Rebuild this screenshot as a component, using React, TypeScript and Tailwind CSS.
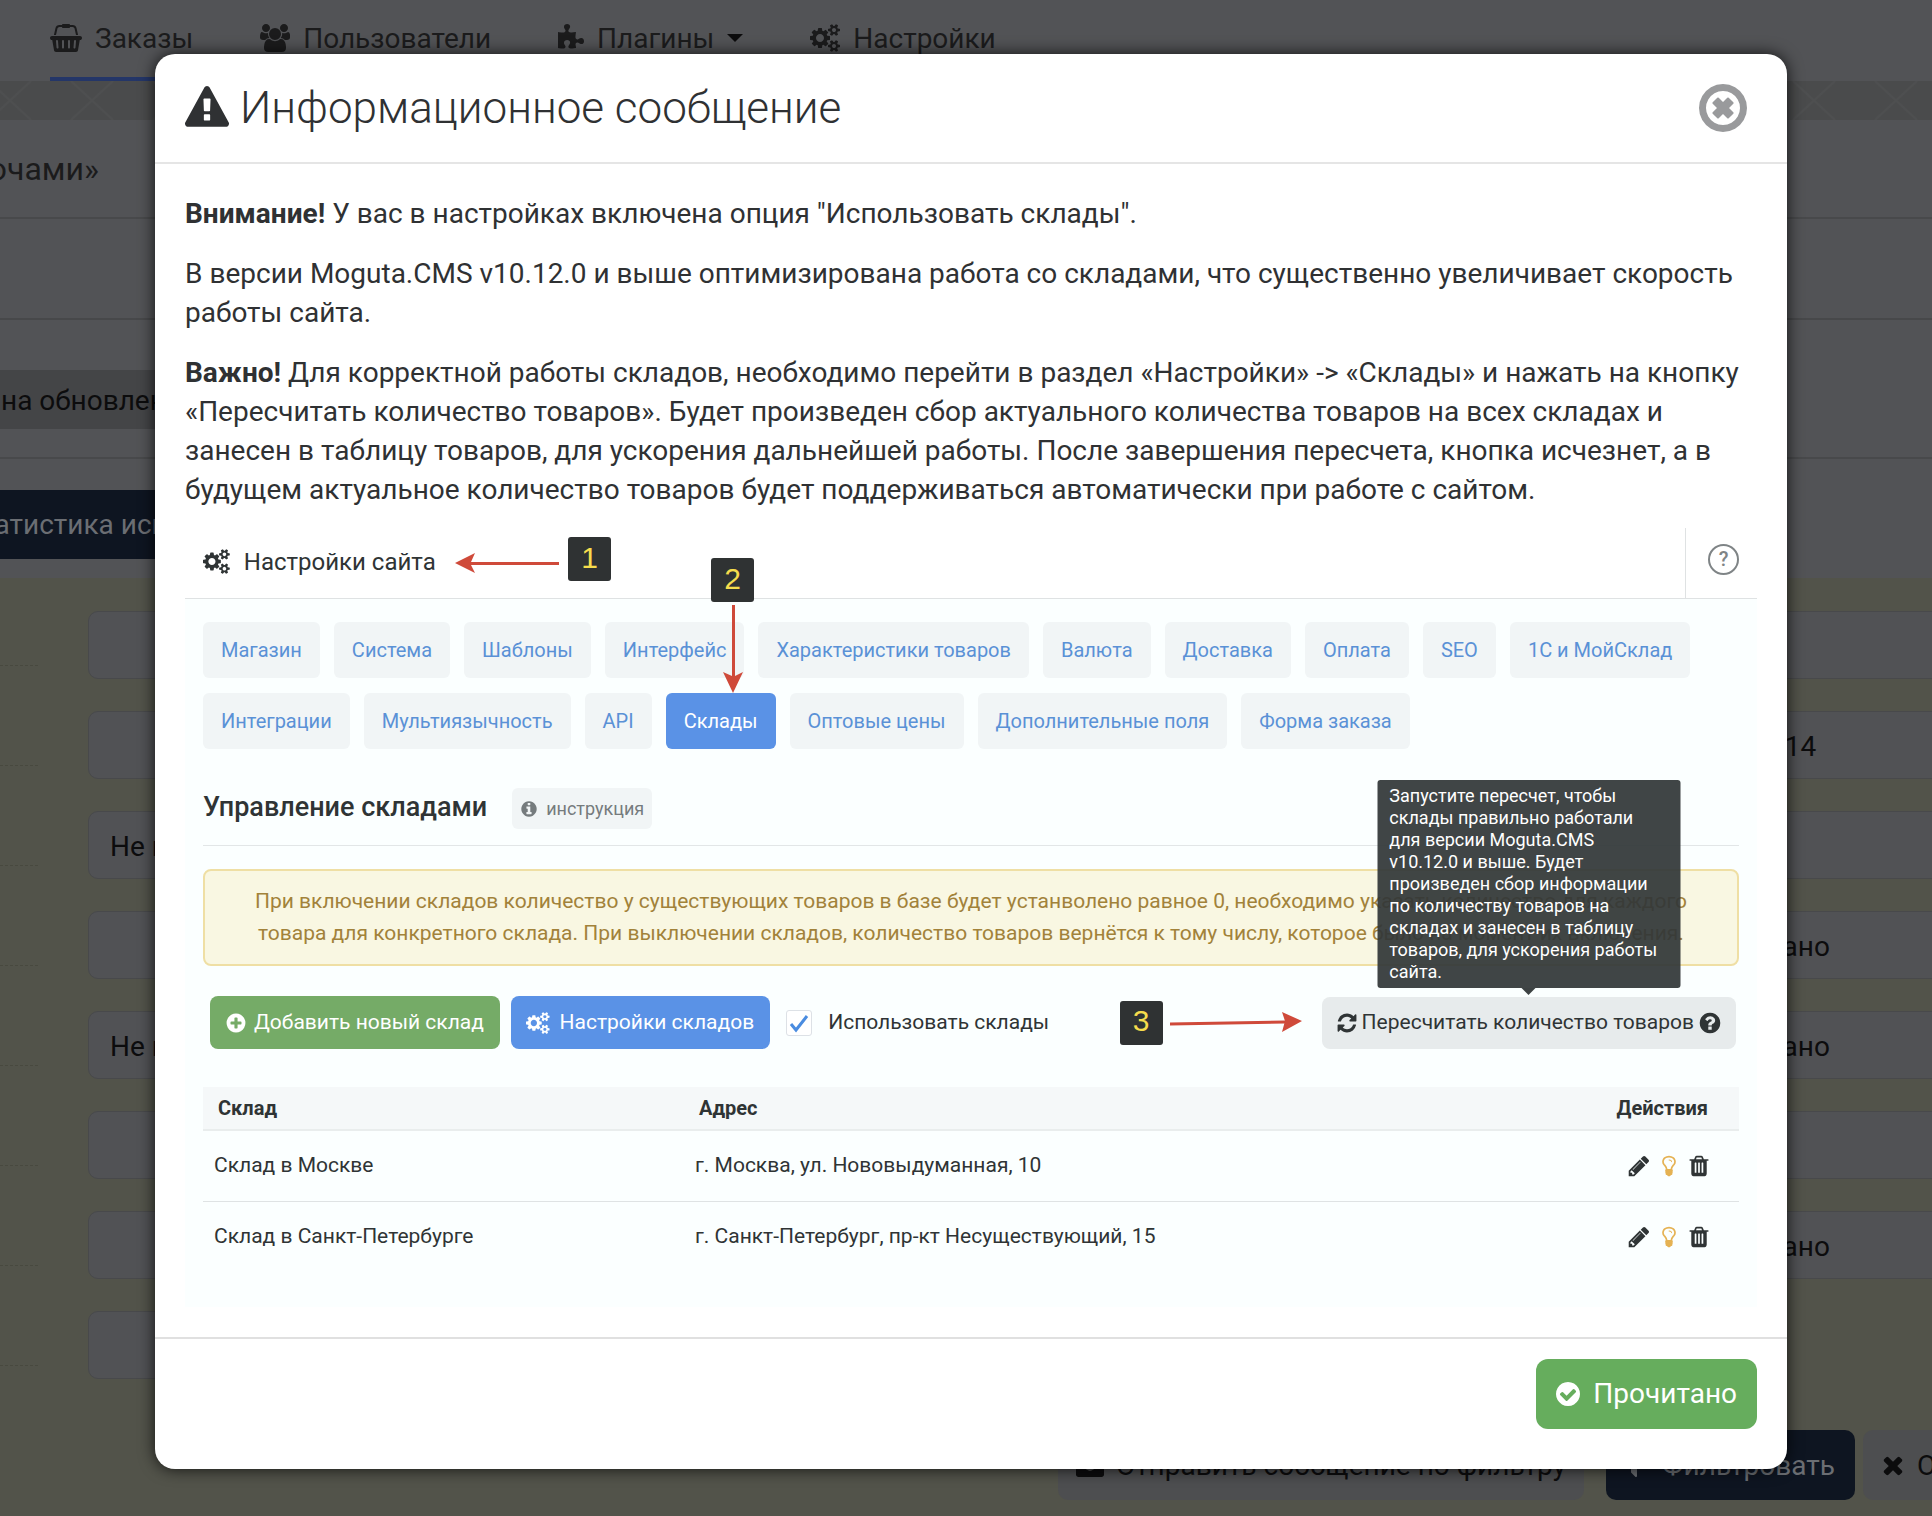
import type { ReactNode } from "react";

// Shared outline of every round icon
const DISC =
  "M1664 896q0 209-103 385.5t-279.5 279.5-385.5 103-385.5-103-279.5-279.5-103-385.5 103-385.5 279.5-279.5 385.5-103 385.5 103 279.5 279.5 103 385.5z";

const icons = {
  basket: {
    width: 2048,
    d: "M1920 768q53 0 90.5 37.5t37.5 90.5-37.5 90.5-90.5 37.5h-15l-115 662q-8 46-44 76t-82 30h-1280q-46 0-82-30t-44-76l-115-662h-15q-53 0-90.5-37.5t-37.5-90.5 37.5-90.5 90.5-37.5h1792zm-1435 800q26-2 43.5-22.5t15.5-46.5l-32-416q-2-26-22.5-43.5t-46.5-15.5-43.5 22.5-15.5 46.5l32 416q2 25 20.5 42t43.5 17h5zm411-64v-416q0-26-19-45t-45-19-45 19-19 45v416q0 26 19 45t45 19 45-19 19-45zm384 0v-416q0-26-19-45t-45-19-45 19-19 45v416q0 26 19 45t45 19 45-19 19-45zm352 5l32-416q2-26-15.5-46.5t-43.5-22.5-46.5 15.5-22.5 43.5l-32 416q-2 26 15.5 46.5t43.5 22.5h5q25 0 43.5-17t20.5-42zm-1156-1217l-93 412h-132l101-441q19-88 89-143.5t160-55.5h167q0-26 19-45t45-19h384q26 0 45 19t19 45h167q90 0 160 55.5t89 143.5l101 441h-132l-93-412q-11-44-45.5-72t-79.5-28h-167q0 26-19 45t-45 19h-384q-26 0-45-19t-19-45h-167q-45 0-79.5 28t-45.5 72z",
  },
  users: {
    width: 1920,
    d: "M593 896q-162 5-265 128h-134q-82 0-138-40.5t-56-118.5q0-353 124-353 6 0 43.5 21t97.5 42.5 119 21.5q67 0 133-23-5 37-5 66 0 159 93 256zm1071 637q0 120-73 189.5t-194 69.5h-874q-121 0-194-69.5t-73-189.5q0-53 3.5-103.5t14-109 26.5-108.5 43-97.5 62-81 85.5-53.5 111.5-20q10 0 43 21.5t73 48 107 48 135 21.5 135-21.5 107-48 73-48 43-21.5q61 0 111.5 20t85.5 53.5 62 81 43 97.5 26.5 108.5 14 109 3.5 103.5zm-1024-1277q0 106-75 181t-181 75-181-75-75-181 75-181 181-75 181 75 75 181zm704 384q0 159-112.5 271.5t-271.5 112.5-271.5-112.5-112.5-271.5 112.5-271.5 271.5-112.5 271.5 112.5 112.5 271.5zm576 225q0 78-56 118.5t-138 40.5h-134q-103-123-265-128 93-97 93-256 0-29-5-66 66 23 133 23 59 0 119-21.5t97.5-42.5 43.5-21q124 0 124 353zm-128-609q0 106-75 181t-181 75-181-75-75-181 75-181 181-75 181 75 75 181z",
  },
  puzzle: {
    width: 1664,
    d: "M1664 1098q0 81-44.5 135t-123.5 54q-41 0-77.5-17.5t-59-38-56.5-38-71-17.5q-110 0-110 124 0 39 16 115t15 115v5q-22 0-33 1-34 3-97.5 11.5t-115.5 13.5-98 5q-61 0-103-26.5t-42-83.5q0-37 17.5-71t38-56.5 38-59 17.5-77.5q0-79-54-123.5t-135-44.5q-84 0-143 45.5t-59 127.5q0 43 15 83t33.5 64.5 33.5 53 15 50.5q0 45-46 89-37 35-117 35-95 0-245-24-9-2-27.5-4t-27.5-4l-13-2q-1 0-3-1-2 0-2-1v-1024q2 1 17.5 3.5t34 5 21.5 3.5q150 24 245 24 80 0 117-35 46-44 46-89 0-22-15-50.5t-33.5-53-33.5-64.5-15-83q0-82 59-127.5t144-45.5q80 0 134 44.5t54 123.5q0 41-17.5 77.5t-38 59-38 56.5-17.5 71q0 57 42 83.5t103 26.5q64 0 180-15t163-17v2q-1 2-3.5 17.5t-5 34-3.5 21.5q-24 150-24 245 0 80 35 117 44 46 89 46 22 0 50.5-15t53-33.5 64.5-33.5 83-15q82 0 127.5 59t45.5 143z",
  },
  cogs: {
    width: 1920,
    d: "M896 896q0-106-75-181t-181-75-181 75-75 181 75 181 181 75 181-75 75-181zm768 512q0-52-38-90t-90-38-90 38-38 90q0 53 37.5 90.5t90.5 37.5 90.5-37.5 37.5-90.5zm0-1024q0-52-38-90t-90-38-90 38-38 90q0 53 37.5 90.5t90.5 37.5 90.5-37.5 37.5-90.5zm-384 421v185q0 10-7 19.5t-16 10.5l-155 24q-11 35-32 76 34 48 90 115 7 11 7 20 0 12-7 19-23 30-82.5 89.5t-78.5 59.5q-11 0-21-7l-115-90q-37 19-77 31-11 108-23 155-7 24-30 24h-186q-11 0-20-7.5t-10-17.5l-23-153q-34-10-75-31l-118 89q-7 7-20 7-11 0-21-8-144-133-144-160 0-9 7-19 10-14 41-53t47-61q-23-44-35-82l-152-24q-10-1-17-9.5t-7-19.5v-185q0-10 7-19.5t16-10.5l155-24q11-35 32-76-34-48-90-115-7-11-7-20 0-12 7-20 22-30 82-89t79-59q11 0 21 7l115 90q34-18 77-32 11-108 23-154 7-24 30-24h186q11 0 20 7.5t10 17.5l23 153q34 10 75 31l118-89q8-7 20-7 11 0 21 8 144 133 144 160 0 8-7 19-12 16-42 54t-45 60q23 48 34 82l152 23q10 2 17 10.5t7 19.5zm640 533v140q0 16-149 31-12 27-30 52 51 113 51 138 0 4-4 7-122 71-124 71-8 0-46-47t-52-68q-20 2-30 2t-30-2q-14 21-52 68t-46 47q-2 0-124-71-4-3-4-7 0-25 51-138-18-25-30-52-149-15-149-31v-140q0-16 149-31 13-29 30-52-51-113-51-138 0-4 4-7 4-2 35-20t59-34 30-16q8 0 46 46.5t52 67.5q20-2 30-2t30 2q51-71 92-112l6-2q4 0 124 70 4 3 4 7 0 25-51 138 17 23 30 52 149 15 149 31zm0-1024v140q0 16-149 31-12 27-30 52 51 113 51 138 0 4-4 7-122 71-124 71-8 0-46-47t-52-68q-20 2-30 2t-30-2q-14 21-52 68t-46 47q-2 0-124-71-4-3-4-7 0-25 51-138-18-25-30-52-149-15-149-31v-140q0-16 149-31 13-29 30-52-51-113-51-138 0-4 4-7 4-2 35-20t59-34 30-16q8 0 46 46.5t52 67.5q20-2 30-2t30 2q51-71 92-112l6-2q4 0 124 70 4 3 4 7 0 25-51 138 17 23 30 52 149 15 149 31z",
  },
  warning: {
    width: 1792,
    d: "M1024 1375v-190q0-14-9.5-23.5t-22.5-9.5h-192q-13 0-22.5 9.5t-9.5 23.5v190q0 14 9.5 23.5t22.5 9.5h192q13 0 22.5-9.5t9.5-23.5zm-2-374l18-459q0-12-10-19-13-11-24-11h-220q-11 0-24 11-10 7-10 21l17 457q0 10 10 16.5t24 6.5h185q14 0 23.5-6.5t10.5-16.5zm-14-934l768 1408q35 63-2 126-17 29-46.5 46t-63.5 17h-1536q-34 0-63.5-17t-46.5-46q-37-63-2-126l768-1408q17-31 47-49t65-18 65 18 47 49z",
  },
  close: {
    width: 1792,
    d: `M1225 1079l-146 146q-10 10-23 10t-23-10l-137-137-137 137q-10 10-23 10t-23-10l-146-146q-10-10-10-23t10-23l137-137-137-137q-10-10-10-23t10-23l146-146q10-10 23-10t23 10l137 137 137-137q10-10 23-10t23 10l146 146q10 10 10 23t-10 23l-137 137 137 137q10 10 10 23t-10 23zM1440 896q0-148-73-273t-198-198-273-73-273 73-198 198-73 273 73 273 198 198 273 73 273-73 198-198 73-273z${DISC}`,
  },
  info: {
    width: 1792,
    d: `M1152 1376v-160q0-14-9-23t-23-9h-96v-512q0-14-9-23t-23-9h-320q-14 0-23 9t-9 23v160q0 14 9 23t23 9h96v320h-96q-14 0-23 9t-9 23v160q0 14 9 23t23 9h448q14 0 23-9t9-23zm-128-896v-160q0-14-9-23t-23-9h-192q-14 0-23 9t-9 23v160q0 14 9 23t23 9h192q14 0 23-9t9-23z${DISC}`,
  },
  plus: {
    width: 1792,
    d: `M1344 960v-128q0-26-19-45t-45-19h-256v-256q0-26-19-45t-45-19h-128q-26 0-45 19t-19 45v256h-256q-26 0-45 19t-19 45v128q0 26 19 45t45 19h256v256q0 26 19 45t45 19h128q26 0 45-19t19-45v-256h256q26 0 45-19t19-45z${DISC}`,
  },
  check: {
    width: 1792,
    d: `M1412 734q0-28-18-46l-91-90q-19-19-45-19t-45 19l-408 407-226-226q-19-19-45-19t-45 19l-91 90q-18 18-18 46 0 27 18 45l362 362q19 19 45 19 27 0 46-19l543-543q18-18 18-45z${DISC}`,
  },
  question: {
    width: 1792,
    d: `M1024 1376v-192q0-14-9-23t-23-9h-192q-14 0-23 9t-9 23v192q0 14 9 23t23 9h192q14 0 23-9t9-23zm256-672q0-88-55.5-163t-138.5-116-170-41q-243 0-371 213-15 24 8 42l132 100q7 6 19 6 16 0 25-12 53-68 86-92 34-24 86-24 48 0 85.5 26t37.5 59q0 38-20 61t-68 45q-63 28-115.5 86.5t-52.5 125.5v36q0 14 9 23t23 9h192q14 0 23-9t9-23q0-19 21.5-49.5t54.5-49.5q32-18 49-28.5t46-35 44.5-48 28-60.5 12.5-81z${DISC}`,
  },
  refresh: {
    width: 1792,
    d: "M1639 1056q0 5-1 7-64 268-268 434.5t-478 166.5q-146 0-282.5-55t-243.5-157l-129 129q-19 19-45 19t-45-19-19-45v-448q0-26 19-45t45-19h448q26 0 45 19t19 45-19 45l-137 137q71 66 161 102t187 36q134 0 250-65t186-179q11-17 53-117 8-23 30-23h192q13 0 22.5 9.5t9.5 22.5zm25-800v448q0 26-19 45t-45 19h-448q-26 0-45-19t-19-45 19-45l138-138q-148-137-349-137-134 0-250 65t-186 179q-11 17-53 117-8 23-30 23h-199q-13 0-22.5-9.5t-9.5-22.5v-7q65-268 270-434.5t480-166.5q146 0 284 55.5t245 156.5l130-129q19-19 45-19t45 19 19 45z",
  },
  pencil: {
    width: 1792,
    d: "M491 1536l91-91-235-235-91 91v107h128v128h107zm523-928q0-22-22-22-10 0-17 7l-542 542q-7 7-7 17 0 22 22 22 10 0 17-7l542-542q7-7 7-17zm-54-192l416 416-832 832h-416v-416zm683 96q0 53-37 90l-166 166-416-416 166-165q36-38 90-38 53 0 91 38l235 234q37 39 37 91z",
  },
  bulb: {
    width: 1792,
    d: "M1120 576q0 13-9.5 22.5t-22.5 9.5-22.5-9.5-9.5-22.5q0-46-54-71t-106-25q-13 0-22.5-9.5t-9.5-22.5 9.5-22.5 22.5-9.5q50 0 99.5 16t87 54 37.5 90zm160 0q0-72-34.5-134t-90-101.5-123-62-136.5-22.5-136.5 22.5-123 62-90 101.5-34.5 134q0 101 68 180 10 11 30.5 33t30.5 33q128 153 141 298h228q13-145 141-298 10-11 30.5-33t30.5-33q68-79 68-180zm128 0q0 155-103 268-45 49-74.5 87t-59.5 95.5-34 107.5q47 28 47 82 0 37-25 64 25 27 25 64 0 52-45 81 13 23 13 47 0 46-31.5 71t-77.5 25q-20 44-60 70t-87 26-87-26-60-70q-46 0-77.5-25t-31.5-71q0-24 13-47-45-29-45-81 0-37 25-64-25-27-25-64 0-54 47-82-4-50-34-107.5t-59.5-95.5-74.5-87q-103-113-103-268 0-99 44.5-184.5t117-142 164-89 186.5-32.5 186.5 32.5 164 89 117 142 44.5 184.5z",
  },
  trash: {
    width: 1792,
    d: "M704 1376v-704q0-14-9-23t-23-9h-64q-14 0-23 9t-9 23v704q0 14 9 23t23 9h64q14 0 23-9t9-23zm256 0v-704q0-14-9-23t-23-9h-64q-14 0-23 9t-9 23v704q0 14 9 23t23 9h64q14 0 23-9t9-23zm256 0v-704q0-14-9-23t-23-9h-64q-14 0-23 9t-9 23v704q0 14 9 23t23 9h64q14 0 23-9t9-23zm-544-992h448l-48-117q-7-9-17-11h-317q-10 2-17 11zm928 32v64q0 14-9 23t-23 9h-96v948q0 83-47 143.5t-113 60.5h-832q-66 0-113-58.5t-47-141.5v-952h-96q-14 0-23-9t-9-23v-64q0-14 9-23t23-9h309l70-167q15-37 54-63t79-26h320q40 0 79 26t54 63l70 167h309q14 0 23 9t9 23z",
  },
  times: {
    width: 1792,
    d: "M1490 1322q0 40-28 68l-136 136q-28 28-68 28t-68-28l-294-294-294 294q-28 28-68 28t-68-28l-136-136q-28-28-28-68t28-68l294-294-294-294q-28-28-28-68t28-68l136-136q28-28 68-28t68 28l294 294 294-294q28-28 68-28t68 28l136 136q28 28 28 68t-28 68l-294 294 294 294q28 28 28 68z",
  },
  filter: {
    width: 1792,
    d: "M1595 295q17 41-14 70l-493 493v742q0 42-39 59-13 5-25 5-27 0-45-19l-256-256q-19-19-19-45v-486l-493-493q-31-29-14-70 17-39 59-39h1280q42 0 59 39z",
  },
  mail: {
    width: 1792,
    d: "M1792 710v794q0 66-47 113t-113 47h-1472q-66 0-113-47t-47-113v-794q44 49 101 87 362 246 497 345 57 42 92.5 65.5t94.5 48 110 24.5h2q51 0 110-24.5t94.5-48 92.5-65.5q170-123 498-345 57-39 100-87zm0-294q0 79-49 151t-122 123q-376 261-468 325-10 7-42.5 30.5t-54 38-52 32.5-57.5 27-50 9h-2q-23 0-50-9t-57.5-27-52-32.5-54-38-42.5-30.5q-91-64-262-182.5t-205-142.5q-62-42-117-115.5t-55-136.5q0-78 41.5-130t118.5-52h1472q65 0 112.5 47t47.5 113z",
  },
};

type IconProps = { name: keyof typeof icons; className: string };

const Icon = ({ name, className }: IconProps) => (
  <svg
    viewBox={`0 0 ${icons[name].width} 1792`}
    className={`w-auto shrink-0 ${className}`}
    fill="currentColor"
    fillRule="evenodd"
    aria-hidden="true"
  >
    <path d={icons[name].d} />
  </svg>
);

const tabs = [
  "Магазин",
  "Система",
  "Шаблоны",
  "Интерфейс",
  "Характеристики товаров",
  "Валюта",
  "Доставка",
  "Оплата",
  "SEO",
  "1С и МойСклад",
  "Интеграции",
  "Мультиязычность",
  "API",
  "Склады",
  "Оптовые цены",
  "Дополнительные поля",
  "Форма заказа",
];

const stores = [
  { name: "Склад в Москве", address: "г. Москва, ул. Нововыдуманная, 10" },
  {
    name: "Склад в Санкт-Петербурге",
    address: "г. Санкт-Петербург, пр-кт Несуществующий, 15",
  },
];

const filterRows = [
  { left: "", right: "" },
  { left: "", right: "1/06/2014" },
  { left: "Не выбрано", right: "" },
  { left: "", right: "Не указано" },
  { left: "Не выбрано", right: "Не указано" },
  { left: "", right: "" },
  { left: "", right: "Не указано" },
  { left: "", right: null },
];

const Field = ({ value, label }: { value: string; label: string }) => (
  <input
    aria-label={label}
    defaultValue={value}
    className="h-[68px] w-full rounded-[10px] border border-[#48494b] bg-[#515255] px-[21px] pt-[2px] text-[28px] text-[#0c0c0d]"
  />
);

const NavItem = ({
  children,
  active,
}: {
  children: ReactNode;
  active?: boolean;
}) => (
  <a
    href="#"
    className={`flex items-center gap-[13px] border-b-4 pb-[1px] ${
      active ? "border-[#243668]" : "border-transparent"
    }`}
  >
    {children}
  </a>
);

const Backdrop = () => (
  <div className="min-h-screen text-[28px] leading-[39px]">
    <nav className="flex h-[81px] gap-[67px] pl-[50px]">
      <NavItem active>
        <Icon name="basket" className="h-7" />
        Заказы
      </NavItem>
      <NavItem>
        <Icon name="users" className="h-7" />
        Пользователи
      </NavItem>
      <NavItem>
        <Icon name="puzzle" className="h-7" />
        Плагины
        <span className="border-x-8 border-t-8 border-x-transparent border-t-[#0c0c0d]" />
      </NavItem>
      <NavItem>
        <Icon name="cogs" className="h-7" />
        Настройки
      </NavItem>
    </nav>

    <div className="h-[39px] bg-[#4a4b4c]">
      <svg className="h-full w-full" stroke="#4e4f50" strokeWidth="2">
        <defs>
          <pattern
            id="cross"
            x="51"
            width="82"
            height="39"
            patternUnits="userSpaceOnUse"
          >
            <path d="M20 0l42 39M62 0L20 39" fill="none" />
          </pattern>
        </defs>
        <rect width="100%" height="100%" fill="url(#cross)" stroke="none" />
      </svg>
    </div>

    <div className="flex h-[99px] items-center border-b-2 border-[#48494b] pt-[2px]">
      <p className="flex w-[99px] justify-end text-[32px] whitespace-nowrap">
        Сайт с ключами»
      </p>
    </div>
    <div className="h-[101px] border-b-2 border-[#47484a]" />
    <div className="flex h-[139px] items-end border-b-2 border-[#48494b] pb-7">
      <p className="flex h-[59px] w-[800px] items-center bg-[#444547] pt-[2px] pl-px text-[#0c0c0d]">
        на обновление
      </p>
    </div>
    <div className="flex h-[119px] items-center pt-3">
      <button className="flex h-[69px] w-[324px] items-center justify-end bg-[#0e1521] whitespace-nowrap text-[#6b6e73]">
        Статистика использования
      </button>
    </div>

    <div className="h-[938px] bg-[#52534a] pt-[33px]">
      <div className="flex flex-col gap-8">
        {filterRows.map((row, i) => (
          <div key={i} className="flex items-start">
            <span className="mt-[54px] mr-[50px] w-[38px] border-t border-dashed border-[#48493f]" />
            <div className="w-[862px]">
              <Field value={row.left} label={`Фильтр ${i + 1}`} />
            </div>
            <div className="ml-auto w-[271px]">
              {row.right !== null && (
                <div className="w-[400px]">
                  <Field value={row.right} label={`Значение ${i + 1}`} />
                </div>
              )}
            </div>
          </div>
        ))}
      </div>
      <div className="mt-[51px] flex justify-end gap-2 overflow-hidden whitespace-nowrap">
        <button className="mr-[14px] flex h-[70px] items-center gap-3 rounded-[10px] bg-[#4d4e50] px-[18px] text-[#0c0c0d]">
          <Icon name="mail" className="h-7" />
          Отправить сообщение по фильтру
        </button>
        <button className="flex h-[70px] items-center gap-3.5 rounded-[10px] bg-[#0e1521] pr-5 pl-3.5 text-[#6b6e73]">
          <Icon name="filter" className="h-7" />
          Фильтровать
        </button>
        <div className="w-[69px]">
          <button className="flex h-[70px] items-center gap-2.5 rounded-[10px] bg-[#4d4e50] px-4 text-[#0c0c0d]">
            <Icon name="times" className="h-7" />
            Отменить
          </button>
        </div>
      </div>
    </div>
  </div>
);

const Step = ({ children }: { children: ReactNode }) => (
  <span className="flex h-11 w-[43px] shrink-0 items-center justify-center rounded-[3px] bg-[#2f3233] pb-1 font-['Liberation_Sans',sans-serif] text-[30px] text-[#f5dc4d]">
    {children}
  </span>
);

const Tooltip = () => (
  <div
    role="tooltip"
    className="absolute bottom-full left-1/2 mb-[9px] w-[303px] -translate-x-1/2 rounded-[3px] bg-[#323738]/93 py-[5px] pr-4 pl-3 text-left text-lg leading-[22px] text-white"
  >
    Запустите пересчет, чтобы склады правильно работали для версии Moguta.CMS
    v10.12.0 и выше. Будет произведен сбор информации по количеству товаров на
    складах и занесен в таблицу товаров, для ускорения работы сайта.
    <span className="absolute top-full left-1/2 -translate-x-1/2 border-x-[7px] border-t-[7px] border-x-transparent border-t-[#3d4243]" />
  </div>
);

const Settings = () => (
  <section className="mt-[19px] text-[#2f3435]">
    <div className="relative flex h-[71px] items-center border-b border-[#dfe2e3] pb-[3px] pl-[18px]">
      <Icon name="cogs" className="h-[25px]" />
      <h3 className="ml-[14px] text-2xl">Настройки сайта</h3>
      <div className="absolute top-[9px] left-[270px] flex items-center gap-[9px]">
        <svg
          className="h-[30px] w-[104px] text-[#cf4a3a]"
          viewBox="0 0 104 30"
          fill="currentColor"
        >
          <path d="M0 19L20 9l-4 9h88v3H16l4 8z" />
        </svg>
        <Step>1</Step>
      </div>
      <div className="absolute top-[30px] left-[526px] flex flex-col items-center gap-[3px]">
        <Step>2</Step>
        <svg
          className="h-[88px] w-[22px] text-[#cf4a3a]"
          viewBox="0 0 22 88"
          fill="currentColor"
        >
          <path d="M11 88L1 67l9 4V0h3v71l8-4z" />
        </svg>
      </div>
      <div className="-mb-[3px] ml-auto flex w-[72px] items-center self-stretch border-l border-[#dfe2e3] pl-[22px]">
        <button
          aria-label="Справка"
          className="mb-[8px] flex size-[31px] items-center justify-center rounded-full border-2 border-[#7f8486] text-xl font-medium text-[#7f8486]"
        >
          ?
        </button>
      </div>
    </div>

    <div className="bg-[#fbffff] px-[18px] pb-[35px]">
      <div className="-mt-px flex flex-wrap gap-x-[14px] gap-y-[15px] pt-6">
        {tabs.map((tab) => (
          <button
            key={tab}
            className={`h-14 rounded-md px-[18px] text-xl ${
              tab === "Склады"
                ? "bg-[#5a92e6] text-white"
                : "bg-[#f1f5f6] text-[#5a91d6]"
            }`}
          >
            {tab}
          </button>
        ))}
      </div>

      <div className="mt-[39px] flex items-center gap-[25px] border-b border-[#e2e6e7] pb-[16px]">
        <h4 className="pb-1 text-[27px] leading-[36px] font-medium">
          Управление складами
        </h4>
        <button className="flex h-[41px] items-center gap-2 rounded-md bg-[#f1f5f6] px-2 text-lg text-[#757b7d]">
          <Icon name="info" className="h-[18px]" />
          инструкция
        </button>
      </div>

      <p className="mt-[23px] rounded-lg border-2 border-[#efdfa4] bg-[#f9f7e2] px-10 pt-[14px] pb-[15px] text-center text-[21px] leading-8 text-[#a2823a]">
        При включении складов количество у существующих товаров в базе будет
        устанволено равное 0, необходимо указать количество для каждого <br />
        товара для конкретного склада. При выключении складов, количество
        товаров вернётся к тому числу, которое было на момент их включения.
      </p>

      <div className="mt-[30px] flex items-center pr-[3px] pl-[7px] text-[21px]">
        <button className="flex h-[53px] items-center gap-[7px] rounded-lg bg-[#75ab67] pr-4 pl-[15px] text-white">
          <Icon name="plus" className="h-[22px]" />
          Добавить новый склад
        </button>
        <button className="ml-[11px] flex h-[53px] items-center gap-2.5 rounded-lg bg-[#5a92e6] pr-4 pl-[15px] text-white">
          <Icon name="cogs" className="h-[22px]" />
          Настройки складов
        </button>
        <label className="ml-4 flex items-center gap-4">
          <span className="relative flex size-[26px] items-center justify-center">
            <input
              type="checkbox"
              defaultChecked
              className="size-full appearance-none rounded-[3px] border border-[#dde1e6] bg-white"
            />
            <svg
              className="absolute size-5"
              viewBox="0 0 20 20"
              fill="none"
              stroke="#4a8ce0"
              strokeWidth="3"
            >
              <path d="M2 11l5 6L18 3" />
            </svg>
          </span>
          Использовать склады
        </label>
        <div className="ml-auto flex items-center gap-[7px]">
          <Step>3</Step>
          <svg className="h-[22px] w-[132px] text-[#cf4a3a]" viewBox="0 0 132 22">
            <path d="M0 12l115-2" stroke="currentColor" strokeWidth="3" />
            <path d="M112 0l20 9-20 11 3-11z" fill="currentColor" />
          </svg>
        </div>
        <div className="relative ml-[20px]">
          <button className="flex h-[52px] items-center gap-1 rounded-lg bg-[#e7ebec] px-[14px]">
            <Icon name="refresh" className="h-[22px]" />
            Пересчитать количество товаров
            <Icon name="question" className="h-6" />
          </button>
          <Tooltip />
        </div>
      </div>

      <table className="mt-[38px] w-full table-fixed text-left text-[21px]">
        <thead className="text-xl">
          <tr className="h-[43px] border-b-2 border-[#e9eded] bg-[#f5f8f9]">
            <th className="w-[481px] pl-[15px] font-bold">Склад</th>
            <th className="pl-[15px] font-bold">Адрес</th>
            <th className="w-[200px] pr-[31px] text-right font-bold">
              Действия
            </th>
          </tr>
        </thead>
        <tbody>
          {stores.map((store) => (
            <tr
              key={store.name}
              className="h-[71px] border-b border-[#dfe3e4] last:border-0"
            >
              <td className="pl-[11px]">{store.name}</td>
              <td className="pl-[11px]">{store.address}</td>
              <td className="pr-[28px]">
                <div className="flex justify-end gap-[6px]">
                  <button aria-label="Редактировать">
                    <Icon name="pencil" className="h-6" />
                  </button>
                  <button aria-label="Активность" className="text-[#e5b253]">
                    <Icon name="bulb" className="h-6" />
                  </button>
                  <button aria-label="Удалить">
                    <Icon name="trash" className="h-6" />
                  </button>
                </div>
              </td>
            </tr>
          ))}
        </tbody>
      </table>
    </div>
  </section>
);

const Modal = () => (
  <div
    role="dialog"
    aria-labelledby="modal-title"
    className="rounded-[20px] bg-white text-[#2f3133] shadow-[0_0_16px_rgba(0,0,0,0.8)]"
  >
    <header className="flex h-[110px] items-center border-b-2 border-[#e5e5e5] pr-[36px] pl-[30px]">
      <Icon name="warning" className="h-11" />
      <h2 id="modal-title" className="ml-[11px] text-[44px] font-light">
        Информационное сообщение
      </h2>
      <button aria-label="Закрыть" className="ml-auto text-[#999a9c]">
        <Icon name="close" className="h-14" />
      </button>
    </header>

    <div className="px-[30px] pt-[30px] pb-[30px]">
      <div className="flex flex-col gap-[21px] text-[28px] leading-[39px]">
        <p>
          <b>Внимание!</b> У вас в настройках включена опция "Использовать
          склады".
        </p>
        <p>
          В версии Moguta.CMS v10.12.0 и выше оптимизирована работа со складами,
          что существенно увеличивает скорость работы сайта.
        </p>
        <p>
          <b>Важно!</b> Для корректной работы складов, необходимо перейти в
          раздел «Настройки» -&gt; «Склады» и нажать на кнопку «Пересчитать
          количество товаров». Будет произведен сбор актуального количества
          товаров на всех складах и занесен в таблицу товаров, для ускорения
          дальнейшей работы. После завершения пересчета, кнопка исчезнет, а в
          будущем актуальное количество товаров будет поддерживаться
          автоматически при работе с сайтом.
        </p>
      </div>
      <Settings />
    </div>

    <footer className="flex justify-end border-t-2 border-[#e0e0e0] px-[30px] pt-5 pb-[40px]">
      <button className="flex h-[70px] items-center gap-[11px] rounded-[12px] bg-[#66ad5d] pr-5 pl-[18px] text-[28px] text-white">
        <Icon name="check" className="h-7" />
        Прочитано
      </button>
    </footer>
  </div>
);

const App = () => {
  return (
    <main className="relative h-screen overflow-hidden bg-[#525356] font-['Roboto',sans-serif] text-[#1b1b1c]">
      <Backdrop />
      <div className="absolute inset-0 pt-[54px] pr-[145px] pl-[155px]">
        <Modal />
      </div>
    </main>
  );
};

export default App;
